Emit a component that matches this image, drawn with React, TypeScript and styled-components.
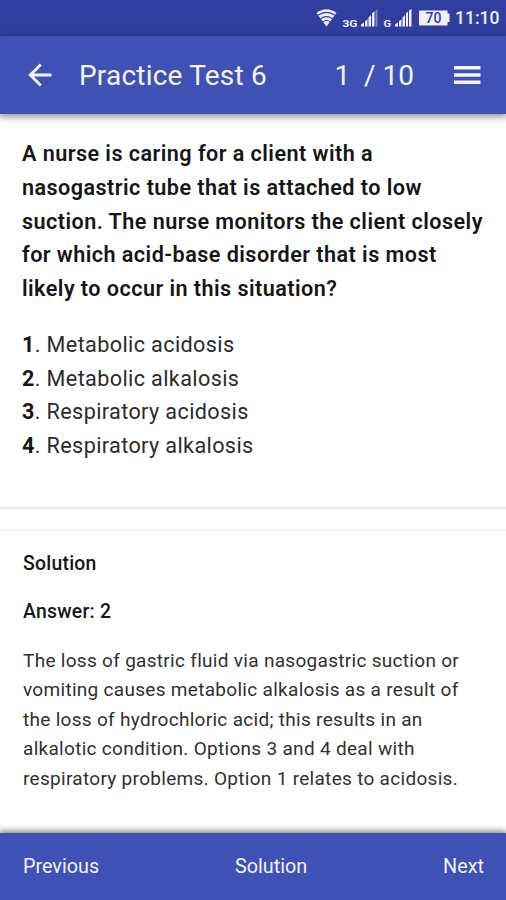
import React from 'react';
import styled, { createGlobalStyle } from 'styled-components';

const GlobalStyle = createGlobalStyle`
  * { box-sizing: border-box; }
  body { margin: 0; background: #fff; font-family: Roboto, sans-serif; }
`;

const Screen = styled.div`
  width: 506px;
  height: 900px;
  display: flex;
  flex-direction: column;
  overflow: hidden;
  background: #fff;
  white-space: nowrap;
`;

const StatusBar = styled.div`
  height: 36px;
  flex: none;
  display: flex;
  align-items: center;
  justify-content: flex-end;
  padding-right: 8px;
  background: #303f9f;
  color: #eef0ff;
`;

const Clock = styled.span`
  width: 43px;
  margin-left: 5px;
  font-size: 17.5px;
  line-height: 36px;
  font-weight: 500;
  letter-spacing: 0;
`;

const AppBar = styled.header`
  height: 78px;
  flex: none;
  display: flex;
  align-items: center;
  padding: 0 22px 0 24px;
  background: #3f51b5;
  color: #f4f5ff;
  box-shadow: 0 2px 7px 1px rgba(0, 0, 0, 0.42);
  z-index: 1;
`;

const Title = styled.h1`
  flex: 1;
  margin: 0 0 0 23px;
  font-size: 28px;
  font-weight: 400;
  letter-spacing: 0.2px;
`;

const Counter = styled.span`
  font-size: 28px;
  letter-spacing: 0;
  white-space: pre;
  margin-right: 40px;
`;

const Content = styled.main`
  flex: 1;
  min-height: 0;
`;

const QuestionCard = styled.section`
  height: 395px;
  padding: 23px 22px 0;
  border-bottom: 2px solid #ececec;
  color: #161616;
  font-size: 21.6px;
  line-height: 33.75px;
`;

const Question = styled.p`
  margin: 0 0 22px;
  font-weight: 600;
  letter-spacing: 0.45px;
`;

const Options = styled.ol`
  margin: 0;
  padding: 0;
  list-style: none;
  letter-spacing: 0.38px;
  color: #2b2b2b;
  b { color: #161616; }
`;

const SolutionCard = styled.section`
  margin-top: 20px;
  border-top: 2px solid #f3f3f3;
  padding: 18px 23px 0;
  font-size: 19px;
  line-height: 29.4px;
`;

const Heading = styled.h2`
  margin: 0 0 18.6px;
  font-size: 19.4px;
  line-height: 29.4px;
  font-weight: 500;
  letter-spacing: 0.25px;
  color: #161616;
`;

const Explanation = styled.p`
  margin: 19.6px 0 0;
  color: #303030;
  letter-spacing: 0.3px;
`;

const BottomBar = styled.footer`
  height: 67px;
  flex: none;
  display: flex;
  justify-content: space-between;
  align-items: center;
  padding: 0 22px 1px 23px;
  background: #3f51b5;
  box-shadow: 0 -1px 6px 1px rgba(0, 0, 0, 0.5);
  z-index: 1;
`;

const NavButton = styled.button`
  border: 0;
  padding: 0;
  background: none;
  font: 400 19.8px Roboto, sans-serif;
  color: #f2f3ff;
`;

const StatusIcons = () => (
  <svg width="136" height="36" viewBox="314 0 136 36" fill="#eef0ff">
    <path d="M316.500 13Q326.500 5.500 336.500 13L326.500 26.500Z" />
    <g fill="none" stroke="#303f9f" strokeWidth="1.100">
      <path d="M318 15.200Q326.500 9.500 335 15.200" />
      <path d="M320.500 18.700Q326.500 14.500 332.500 18.700" />
      <path d="M322.500 22Q326.500 19 330.500 22" />
    </g>
    <text x="342.500" y="26.500" fontSize="9.500" fontWeight="700" textLength="15" lengthAdjust="spacingAndGlyphs">3G</text>
    <path d="M361 26.500v-2l3-2v4zM365 26.500v-5l2.500-2.300v7.300zM368.500 26.500v-9l2.500-2.500v11.500zM372 26.500v-13l2.500-2.500v15.500z" />
    <path d="M375.500 10.500l2-1.500v17.500h-2z" opacity=".4" />
    <text x="383.500" y="26.500" fontSize="9.500" fontWeight="700" textLength="7.500" lengthAdjust="spacingAndGlyphs">G</text>
    <path d="M395 26.500v-2l3-2v4zM399 26.500v-5l2.500-2.300v7.300zM402.500 26.500v-9l2.500-2.500v11.500zM406 26.500v-13l2-2v15zM409 26.500V10.500l2.500-1.500v17.500z" />
    <path d="M420 10.500h27.500v3h2v8.500h-2v3.500H420q-1 0-1-1V11.500q0-1 1-1z" />
    <text x="433.500" y="23" fontSize="14" fontWeight="500" textAnchor="middle" style={{ fill: '#303f9f' }}>70</text>
  </svg>
);

const BackIcon = () => (
  <svg width="32" height="28" viewBox="24 61 32 28" fill="none" stroke="#f4f5ff" strokeWidth="2.800">
    <path d="M51.500 75H30.500M40.800 64.500L30.300 75L40.800 85.500" />
  </svg>
);

const MenuIcon = () => (
  <svg width="30" height="22" viewBox="454 64 30 22" fill="#f4f5ff">
    <path d="M454 66h26.500v3.500H454zM454 73.300h26.500v3.500H454zM454 80.500h26.500v3.500H454z" />
  </svg>
);

const questionLines = [
  'A nurse is caring for a client with a',
  'nasogastric tube that is attached to low',
  'suction. The nurse monitors the client closely',
  'for which acid-base disorder that is most',
  'likely to occur in this situation?',
];

const options = [
  'Metabolic acidosis',
  'Metabolic alkalosis',
  'Respiratory acidosis',
  'Respiratory alkalosis',
];

const explanationLines = [
  'The loss of gastric fluid via nasogastric suction or',
  'vomiting causes metabolic alkalosis as a result of',
  'the loss of hydrochloric acid; this results in an',
  'alkalotic condition. Options 3 and 4 deal with',
  'respiratory problems. Option 1 relates to acidosis.',
];

const Lines = ({ lines }: { lines: string[] }) => (
  <>
    {lines.map((line) => (
      <React.Fragment key={line}>{line}<br /></React.Fragment>
    ))}
  </>
);

export default function App() {
  return (
    <Screen>
      <GlobalStyle />
      <StatusBar>
        <StatusIcons />
        <Clock>11:10</Clock>
      </StatusBar>
      <AppBar>
        <BackIcon />
        <Title>Practice Test 6</Title>
        <Counter>{'1  / 10'}</Counter>
        <MenuIcon />
      </AppBar>
      <Content>
        <QuestionCard>
          <Question><Lines lines={questionLines} /></Question>
          <Options>
            {options.map((option, i) => (
              <li key={option}><b>{i + 1}</b>. {option}</li>
            ))}
          </Options>
        </QuestionCard>
        <SolutionCard>
          <Heading>Solution</Heading>
          <Heading>Answer: 2</Heading>
          <Explanation><Lines lines={explanationLines} /></Explanation>
        </SolutionCard>
      </Content>
      <BottomBar>
        <NavButton>Previous</NavButton>
        <NavButton>Solution</NavButton>
        <NavButton>Next</NavButton>
      </BottomBar>
    </Screen>
  );
}
